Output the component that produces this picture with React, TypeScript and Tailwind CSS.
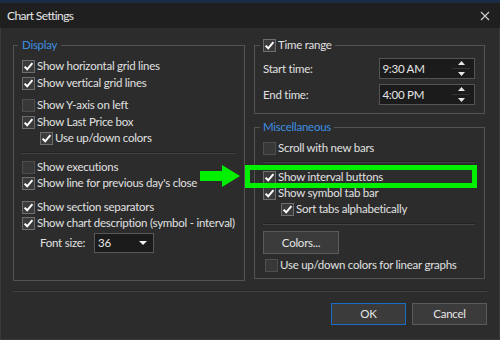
import React from 'react';

// --- Small pieces ---
function Box({ checked }: { checked: boolean }) {
    return (
        <span className={`w-[13px] h-[13px] shrink-0 border flex items-center justify-center ${checked ? 'border-[#6e6e6e] bg-[#3b3b3b]' : 'border-[#4e4e4e] bg-[#383838]'}`}>
            {checked && (
                <svg width="11" height="11" viewBox="0 0 11 11">
                    <polyline points="1.6,5.6 4.2,8.3 9.4,2.2" fill="none" stroke="#ffffff" strokeWidth="2" />
                </svg>
            )}
        </span>
    );
}

function Check({ checked, label, className = '' }: { checked: boolean; label: string; className?: string }) {
    return (
        <div className={`h-[16px] flex items-center gap-[2px] whitespace-nowrap ${className}`}>
            <Box checked={checked} />
            <span>{label}</span>
        </div>
    );
}

function Sep({ className = '' }: { className?: string }) {
    return <div className={`h-[2px] border-t border-[#222] border-b border-b-[#444] ${className}`} />;
}

function Spin({ value }: { value: string }) {
    return (
        <div className="w-[96px] h-[21px] border border-[#555] bg-[#1b1b1b] flex items-center justify-between pl-[2px] pr-[4px]">
            <span className="text-[#e6e6e6]">{value}</span>
            <div className="w-[18px] h-full flex flex-col items-center justify-center gap-[3px]">
                <svg width="7" height="4" viewBox="0 0 7 4"><polygon points="0,4 7,4 3.5,0" fill="#e6e6e6" /></svg>
                <div className="w-full h-px bg-[#333]" />
                <svg width="7" height="4" viewBox="0 0 7 4"><polygon points="0,0 7,0 3.5,4" fill="#e6e6e6" /></svg>
            </div>
        </div>
    );
}

// --- Dialog ---
export default function App() {
    return (
        <div className="w-[500px] h-[340px] bg-[#2c2c2c] relative overflow-hidden text-[11.5px] leading-[16px] tracking-[-0.25px] text-[#e0e0e0] font-['Lato','Liberation_Sans',sans-serif]">
            <div className="h-[3px] bg-[#1b2c47]" />

            {/* Title bar */}
            <div className="h-[25px] bg-[#1f1f1f] flex items-center justify-between pl-[7px] pr-[10px]">
                <span className="text-[12px] tracking-[-0.6px] text-[#e6e6e6]">Chart Settings</span>
                <svg width="10" height="10" viewBox="0 0 10 10">
                    <path d="M1 1 L9 9 M9 1 L1 9" stroke="#cfcfcf" strokeWidth="1.1" />
                </svg>
            </div>

            {/* Body */}
            <div className="border-x border-b border-[#3a3a3a] h-[312px]">
                <div className="flex gap-[9px] px-[12px] pt-[9px]">
                    {/* Display */}
                    <fieldset className="w-[232px] min-w-0 h-[244px] border border-[#535353] pl-[4px] pr-[9px]">
                        <legend className="px-[4px] text-[#3d8fe0]">Display</legend>
                        <div className="pl-[4px] pt-[5px]">
                            <Check checked label="Show horizontal grid lines" />
                            <Check checked label="Show vertical grid lines" className="mt-[1px]" />
                            <Check checked={false} label="Show Y-axis on left" className="mt-[6px]" />
                            <Check checked label="Show Last Price box" className="mt-[1px]" />
                            <Check checked label="Use up/down colors" className="ml-[18px]" />
                            <Sep className="mt-[6px]" />
                            <Check checked={false} label="Show executions" className="mt-[5px]" />
                            <Check checked label="Show line for previous day's close" />
                            <Check checked label="Show section separators" className="mt-[8px]" />
                            <Check checked label="Show chart description (symbol - interval)" />
                            <div className="flex items-center mt-[2px] ml-[18px]">
                                <span className="w-[54px]">Font size:</span>
                                <div className="w-[60px] h-[20px] border border-[#585858] bg-[#1b1b1b] flex items-center justify-between pl-[3px] pr-[6px]">
                                    <span className="text-[#e6e6e6]">36</span>
                                    <svg width="8" height="4" viewBox="0 0 8 4"><polygon points="0,0 8,0 4,4" fill="#f0f0f0" /></svg>
                                </div>
                            </div>
                        </div>
                    </fieldset>

                    {/* Right column */}
                    <div className="w-[231px] flex flex-col">
                        <fieldset className="min-w-0 h-[77px] border border-[#535353] pl-[5px] pr-[9px]">
                            <legend className="px-[3px]">
                                <Check checked label="Time range" />
                            </legend>
                            <div className="pl-[3px] pt-[5px] flex flex-col gap-[5px]">
                                <div className="flex items-center">
                                    <span className="w-[117px]">Start time:</span>
                                    <Spin value="9:30 AM" />
                                </div>
                                <div className="flex items-center">
                                    <span className="w-[117px]">End time:</span>
                                    <Spin value="4:00 PM" />
                                </div>
                            </div>
                        </fieldset>

                        <fieldset className="min-w-0 mt-[5px] h-[160px] border border-[#535353] pl-[5px] pr-[9px]">
                            <legend className="px-[3px] text-[#3d8fe0]">Miscellaneous</legend>
                            <div className="pl-[3px] pt-[5px]">
                                <Check checked={false} label="Scroll with new bars" />
                                <Sep className="mt-[5px]" />
                                <Check checked label="Show interval buttons" className="mt-[6px]" />
                                <Check checked label="Show symbol tab bar" />
                                <Check checked label="Sort tabs alphabetically" className="ml-[18px]" />
                                <Sep className="mt-[6px]" />
                                <button className="mt-[6px] w-[76px] h-[23px] border border-[#5a5a5a] bg-[#3b3b3b] text-[#e4e4e4]">Colors...</button>
                                <Check checked={false} label="Use up/down colors for linear graphs" className="mt-[3px] ml-[2px]" />
                            </div>
                        </fieldset>
                    </div>
                </div>

                {/* Footer */}
                <Sep className="mt-[9px] mx-[12px]" />
                <div className="flex justify-end gap-[6px] mt-[11px] pr-[12px]">
                    <button className="w-[75px] h-[22px] border border-[#1c6cc4] bg-[#3b3b3b] text-[#e6e6e6]">OK</button>
                    <button className="w-[75px] h-[22px] border border-[#5a5a5a] bg-[#3b3b3b] text-[#e6e6e6]">Cancel</button>
                </div>
            </div>

            {/* Annotation overlay */}
            <svg className="absolute left-[200px] top-[165px]" width="41" height="22" viewBox="0 0 41 22">
                <polygon points="0,6 22,6 22,0 40,11 22,22 22,16 0,16" fill="#00f000" />
            </svg>
            <div className="absolute left-[245px] top-[165px] w-[232px] h-[23px] border-[5px] border-[#00f000]" />
        </div>
    );
}
